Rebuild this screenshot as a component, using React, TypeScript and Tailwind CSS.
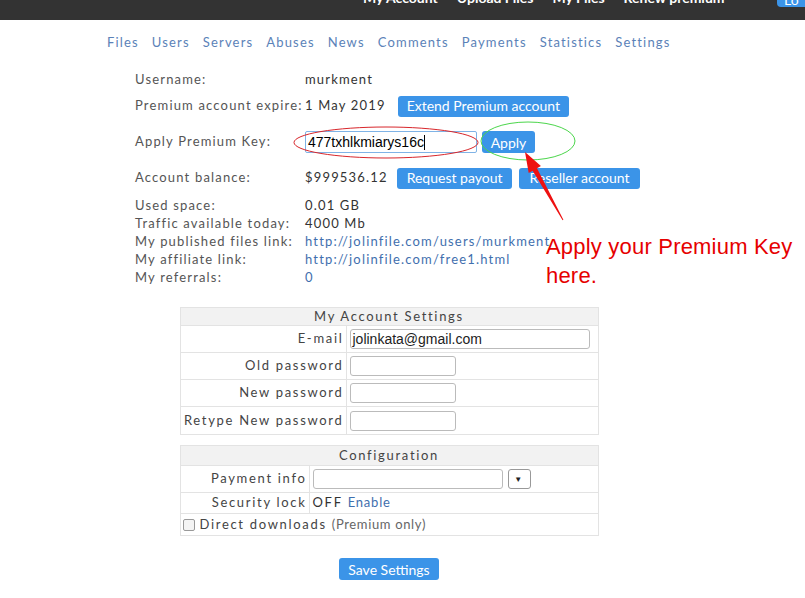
import React from 'react';

const TOP_LINKS = ['My Account', 'Upload Files', 'My Files', 'Renew premium'];
const NAV = ['Files', 'Users', 'Servers', 'Abuses', 'News', 'Comments', 'Payments', 'Statistics', 'Settings'];

function Btn({ children, px = 'px-[9px]' }: { children: React.ReactNode; px?: string }) {
  return (
    <button className={`h-[21px] ${px} rounded-[3px] bg-[#3b94e8] text-white text-[14px] leading-none tracking-normal`}>
      {children}
    </button>
  );
}

function InfoRow({ label, h, gap = 'gap-[12px]', children }: { label: string; h: string; gap?: string; children: React.ReactNode }) {
  return (
    <div className={`flex items-center ${h}`}>
      <div className="w-[170px] text-[#555]">{label}</div>
      <div className={`flex items-center ${gap} text-[#333]`}>{children}</div>
    </div>
  );
}

function Field({ w }: { w: string }) {
  return <div className={`h-[20px] ${w} border border-[#bbb] rounded-[3px] bg-white`} />;
}

export default function App() {
  return (
    <div className="w-[805px] h-[598px] bg-white relative overflow-hidden font-['Lato',sans-serif] text-[13px] tracking-[0.09em]">
      {/* Top bar */}
      <div className="h-[20px] bg-[#333] overflow-hidden flex items-start">
        <div className="flex gap-[19px] pl-[363px] -mt-[13px] text-white font-bold text-[14px] tracking-normal">
          {TOP_LINKS.map((t) => (
            <span key={t}>{t}</span>
          ))}
        </div>
        <div className="ml-auto -mr-[12px] -mt-[14px] w-[40px] h-[21px] bg-[#3b94e8] rounded-[4px] text-white text-[14px] pl-[7px] pt-[3px] tracking-normal">
          Lo
        </div>
      </div>

      {/* Admin nav */}
      <nav className="mt-[13px] h-[20px] flex items-center gap-[13px] pl-[107px] text-[#5b82b8]">
        {NAV.map((n) => (
          <span key={n}>{n}</span>
        ))}
      </nav>

      {/* Account info */}
      <div className="mt-[14px] pl-[135px]">
        <InfoRow label="Username:" h="h-[25px]">murkment</InfoRow>
        <InfoRow label="Premium account expire:" h="h-[28px]">
          <span>1 May 2019</span>
          <Btn>Extend Premium account</Btn>
        </InfoRow>
        <InfoRow label="Apply Premium Key:" h="h-[44px]" gap="gap-[5px]">
          <div className="w-[172px] h-[22px] border border-[#7fb3e6] rounded-[2px] flex items-center px-[2px] font-['Liberation_Sans',sans-serif] text-[14px] tracking-normal text-black">
            477txhlkmiarys16c<span className="w-px h-[15px] bg-black" />
          </div>
          <button className="h-[22px] w-[53px] rounded-[3px] bg-[#3b94e8] text-white text-[14px] tracking-normal">
            Apply
          </button>
        </InfoRow>
        <InfoRow label="Account balance:" h="h-[28px]" gap="gap-[9px]">
          <span>$999536.12</span>
          <div className="flex gap-[7px]">
            <Btn px="px-[10px]">Request payout</Btn>
            <Btn px="px-[10px]">Reseller account</Btn>
          </div>
        </InfoRow>
        <div className="mt-[4px] leading-[18px]">
          <InfoRow label="Used space:" h="h-[18px]">0.01 GB</InfoRow>
          <InfoRow label="Traffic available today:" h="h-[18px]">4000 Mb</InfoRow>
          <InfoRow label="My published files link:" h="h-[18px]">
            <span className="text-[#3f6fae]">http://jolinfile.com/users/murkment</span>
          </InfoRow>
          <InfoRow label="My affiliate link:" h="h-[18px]">
            <span className="text-[#3f6fae]">http://jolinfile.com/free1.html</span>
          </InfoRow>
          <InfoRow label="My referrals:" h="h-[18px]">
            <span className="text-[#3f6fae]">0</span>
          </InfoRow>
        </div>
      </div>

      {/* Settings tables */}
      <div className="w-[778px] flex flex-col items-center tracking-[0.13em]">
        <div className="mt-[21px] w-[419px] border border-[#e3e3e3] text-[#444]">
          <div className="h-[18px] bg-[#f2f2f2] border-b border-[#e3e3e3] flex items-center justify-center">
            My Account Settings
          </div>
          {[
            ['E-mail', 'email'],
            ['Old password', ''],
            ['New password', ''],
            ['Retype New password', ''],
          ].map(([label, kind]) => (
            <div key={label} className="h-[27px] flex border-b last:border-b-0 border-[#e3e3e3]">
              <div className="w-[166px] border-r border-[#e3e3e3] flex items-center justify-end pr-[2px]">{label}</div>
              <div className="flex items-center pl-[3px]">
                {kind === 'email' ? (
                  <div className="w-[240px] h-[20px] border border-[#bbb] rounded-[3px] flex items-center px-[2px] font-['Liberation_Sans',sans-serif] text-[14px] tracking-normal text-[#222]">
                    jolinkata@gmail.com
                  </div>
                ) : (
                  <Field w="w-[106px]" />
                )}
              </div>
            </div>
          ))}
        </div>

        <div className="mt-[10px] w-[419px] border border-[#e3e3e3] text-[#444]">
          <div className="h-[20px] bg-[#f2f2f2] border-b border-[#e3e3e3] flex items-center justify-center">
            Configuration
          </div>
          <div className="h-[27px] flex border-b border-[#e3e3e3]">
            <div className="w-[129px] border-r border-[#e3e3e3] flex items-center justify-end pr-[2px]">Payment info</div>
            <div className="flex items-center pl-[3px] gap-[5px]">
              <Field w="w-[190px]" />
              <div className="w-[23px] h-[20px] border border-[#999] rounded-[3px] flex items-center justify-center text-[8px] text-[#222]">
                ▼
              </div>
            </div>
          </div>
          <div className="h-[21px] flex border-b border-[#e3e3e3]">
            <div className="w-[129px] border-r border-[#e3e3e3] flex items-center justify-end pr-[2px]">Security lock</div>
            <div className="flex items-center pl-[3px] gap-[5px]">
              <span className="text-[#333]">OFF</span>
              <span className="text-[#3f6fae] tracking-[0.06em]">Enable</span>
            </div>
          </div>
          <div className="h-[21px] flex items-center pl-[2px] gap-[5px]">
            <span className="w-[12px] h-[12px] border border-[#999] rounded-[2px] bg-[#f4f4f4]" />
            <span>Direct downloads</span>
            <span className="text-[13px] text-[#666] tracking-[0.05em]">(Premium only)</span>
          </div>
        </div>

        <button className="mt-[22px] h-[22px] w-[100px] rounded-[3px] bg-[#3b94e8] text-white text-[14px] tracking-normal">
          Save Settings
        </button>
      </div>

      {/* Annotation overlay */}
      <svg className="absolute left-0 top-0 pointer-events-none" width="805" height="598">
        <ellipse cx="386" cy="142.5" rx="92" ry="15.5" fill="none" stroke="#d8262b" strokeWidth="1" />
        <ellipse cx="528" cy="141" rx="47" ry="19" fill="none" stroke="#4bd64b" strokeWidth="1" />
        <polygon
          points="525,152 540.9,166.1 537,168.3 563.4,219.8 562.6,220.2 532.6,170.7 528.7,172.9"
          fill="#ee1111"
        />
      </svg>
      <div className="absolute left-[546px] top-[232px] whitespace-nowrap text-[#e60000] text-[22px] leading-[29px] tracking-[0.2px] font-['Liberation_Sans',sans-serif]">
        Apply your Premium Key
        <br />
        here.
      </div>
    </div>
  );
}
